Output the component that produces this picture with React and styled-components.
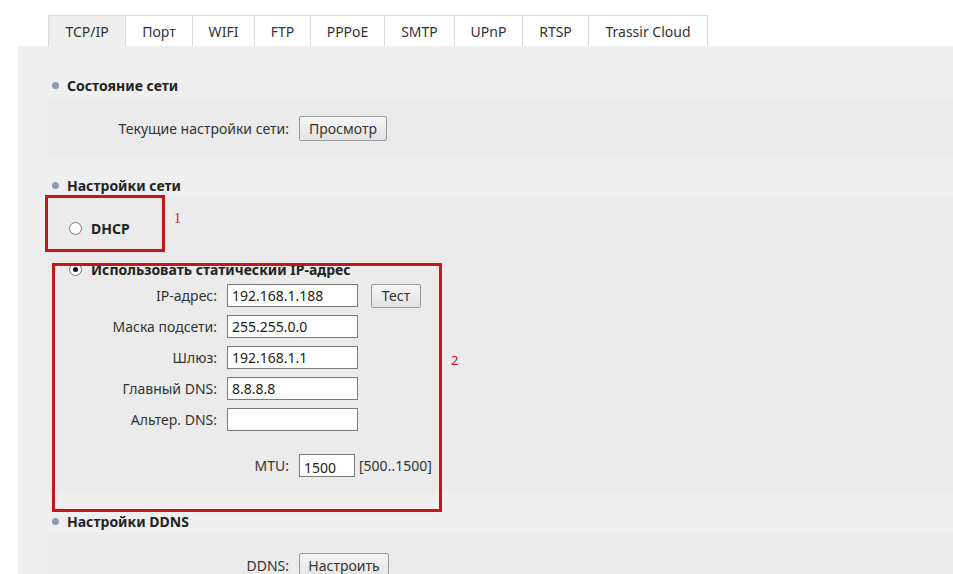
import styled, { createGlobalStyle } from 'styled-components';

const GlobalStyle = createGlobalStyle`
  html, body {
    margin: 0;
    padding: 0;
    background: #ffffff;
    font-family: "Noto Sans", "Liberation Sans", sans-serif;
    color: #333;
  }
  * { box-sizing: border-box; }
`;

const Page = styled.div`
  position: relative;
  width: 953px;
  height: 574px;
  overflow: hidden;
  padding: 15px 0 0 18px;
`;

const TabBar = styled.div`
  display: flex;
  margin-left: 31px;
  height: 31px;
`;

const Tab = styled.div`
  display: flex;
  align-items: center;
  justify-content: center;
  width: ${(p) => p.w}px;
  height: 31px;
  font-size: 14px;
  color: #333;
  background: ${(p) => (p.active ? '#efefef' : '#ffffff')};
  border: 1px solid #dcdcdc;
  border-bottom: none;
  margin-left: -1px;
`;

const Panel = styled.div`
  background: #efefef;
  padding: 10px 0 0 30px;
  height: 100%;
`;

const SectionHeader = styled.div`
  display: flex;
  align-items: center;
  height: 43px;
  padding-top: 16px;
  padding-left: 4px;
  font-size: 14px;
  font-weight: 700;
  color: #222;
`;

const Bullet = styled.span`
  width: 7px;
  height: 7px;
  border-radius: 50%;
  background: #8e9bb0;
  margin-right: 8px;
`;

const SectionBody = styled.div`
  background: #ebebeb;
  display: flex;
  flex-direction: column;
  padding: ${(p) => p.pad || '17px 0 15px 0'};
`;

const Row = styled.div`
  display: flex;
  align-items: center;
  height: ${(p) => p.h || 25}px;
  margin-top: ${(p) => p.mt || 0}px;
`;

const Label = styled.div`
  width: ${(p) => p.w}px;
  text-align: right;
  font-size: 14px;
  color: #333;
  padding-right: 10px;
`;

const Button = styled.div`
  display: flex;
  align-items: center;
  justify-content: center;
  width: ${(p) => p.w}px;
  height: ${(p) => p.h || 25}px;
  margin-left: ${(p) => p.ml || 0}px;
  font-size: 14px;
  color: #333;
  background: linear-gradient(#f6f6f6, #e2e2e2);
  border: 1px solid #9a9a9a;
  border-radius: 2px;
`;

const Input = styled.div`
  display: flex;
  align-items: center;
  width: ${(p) => p.w || 131}px;
  height: 23px;
  background: #fff;
  border: 1px solid #7a7a7a;
  padding: ${(p) => (p.low ? '3px 0 0 4px' : '0 4px')};
  font-size: 14px;
  color: #222;
`;

const Hint = styled.span`
  font-size: 14px;
  color: #333;
  margin-left: 4px;
`;

const RadioRow = styled.div`
  display: flex;
  align-items: center;
  height: 24px;
  margin-top: ${(p) => p.mt || 0}px;
  padding-left: 21px;
  font-size: 14px;
  font-weight: 700;
  color: #222;
`;

const Radio = styled.span`
  position: relative;
  width: 13px;
  height: 13px;
  border-radius: 50%;
  border: 1px solid #777;
  background: #fff;
  margin-right: 9px;
  &::after {
    content: '';
    display: ${(p) => (p.checked ? 'block' : 'none')};
    position: absolute;
    left: 3px;
    top: 3px;
    width: 5px;
    height: 5px;
    border-radius: 50%;
    background: #111;
  }
`;

const Mark = styled.div`
  position: absolute;
  left: ${(p) => p.x}px;
  top: ${(p) => p.y}px;
  width: ${(p) => p.w}px;
  height: ${(p) => p.h}px;
  border: 3px solid #c8151b;
  pointer-events: none;
`;

const MarkNum = styled.div`
  position: absolute;
  left: ${(p) => p.x}px;
  top: ${(p) => p.y}px;
  font-family: ${(p) => (p.serif ? '"Liberation Serif", serif' : '"Noto Sans", sans-serif')};
  font-size: ${(p) => (p.serif ? 14 : 13)}px;
  color: #c8151b;
`;

const tabs = [
  { name: 'TCP/IP', w: 78 },
  { name: 'Порт', w: 68 },
  { name: 'WIFI', w: 63 },
  { name: 'FTP', w: 57 },
  { name: 'PPPoE', w: 75 },
  { name: 'SMTP', w: 71 },
  { name: 'UPnP', w: 69 },
  { name: 'RTSP', w: 67 },
  { name: 'Trassir Cloud', w: 120 },
];

const staticFields = [
  { label: 'IP-адрес:', value: '192.168.1.188', test: true },
  { label: 'Маска подсети:', value: '255.255.0.0' },
  { label: 'Шлюз:', value: '192.168.1.1' },
  { label: 'Главный DNS:', value: '8.8.8.8' },
  { label: 'Альтер. DNS:', value: '' },
];

const App = () => {
  return (
    <Page>
      <GlobalStyle />
      <TabBar>
        {tabs.map((t, i) => (
          <Tab key={t.name} w={t.w} active={i === 0}>
            {t.name}
          </Tab>
        ))}
      </TabBar>
      <Panel>
        <SectionHeader>
          <Bullet />
          Состояние сети
        </SectionHeader>
        <SectionBody>
          <Row>
            <Label w={251}>Текущие настройки сети:</Label>
            <Button w={88}>Просмотр</Button>
          </Row>
        </SectionBody>

        <SectionHeader>
          <Bullet />
          Настройки сети
        </SectionHeader>
        <SectionBody pad="17px 0 15px 0">
          <RadioRow>
            <Radio />
            DHCP
          </RadioRow>
          <RadioRow mt={17}>
            <Radio checked />
            Использовать статический IP-адрес
          </RadioRow>
          {staticFields.map((f, i) => (
            <Row key={f.label} h={23} mt={i === 0 ? 3 : 8}>
              <Label w={179}>{f.label}</Label>
              <Input>{f.value}</Input>
              {f.test && (
                <Button w={50} h={24} ml={13}>
                  Тест
                </Button>
              )}
            </Row>
          ))}
          <Row h={23} mt={23}>
            <Label w={251}>MTU:</Label>
            <Input w={56} low>
              1500
            </Input>
            <Hint>[500..1500]</Hint>
          </Row>
        </SectionBody>

        <SectionHeader>
          <Bullet />
          Настройки DDNS
        </SectionHeader>
        <SectionBody pad="18px 0 15px 0">
          <Row>
            <Label w={251}>DDNS:</Label>
            <Button w={90}>Настроить</Button>
          </Row>
        </SectionBody>
      </Panel>

      <Mark x={45} y={195} w={120} h={57} />
      <MarkNum x={174} y={211} serif>
        1
      </MarkNum>
      <Mark x={52} y={263} w={390} h={249} />
      <MarkNum x={451} y={351}>
        2
      </MarkNum>
    </Page>
  );
};

export default App;
